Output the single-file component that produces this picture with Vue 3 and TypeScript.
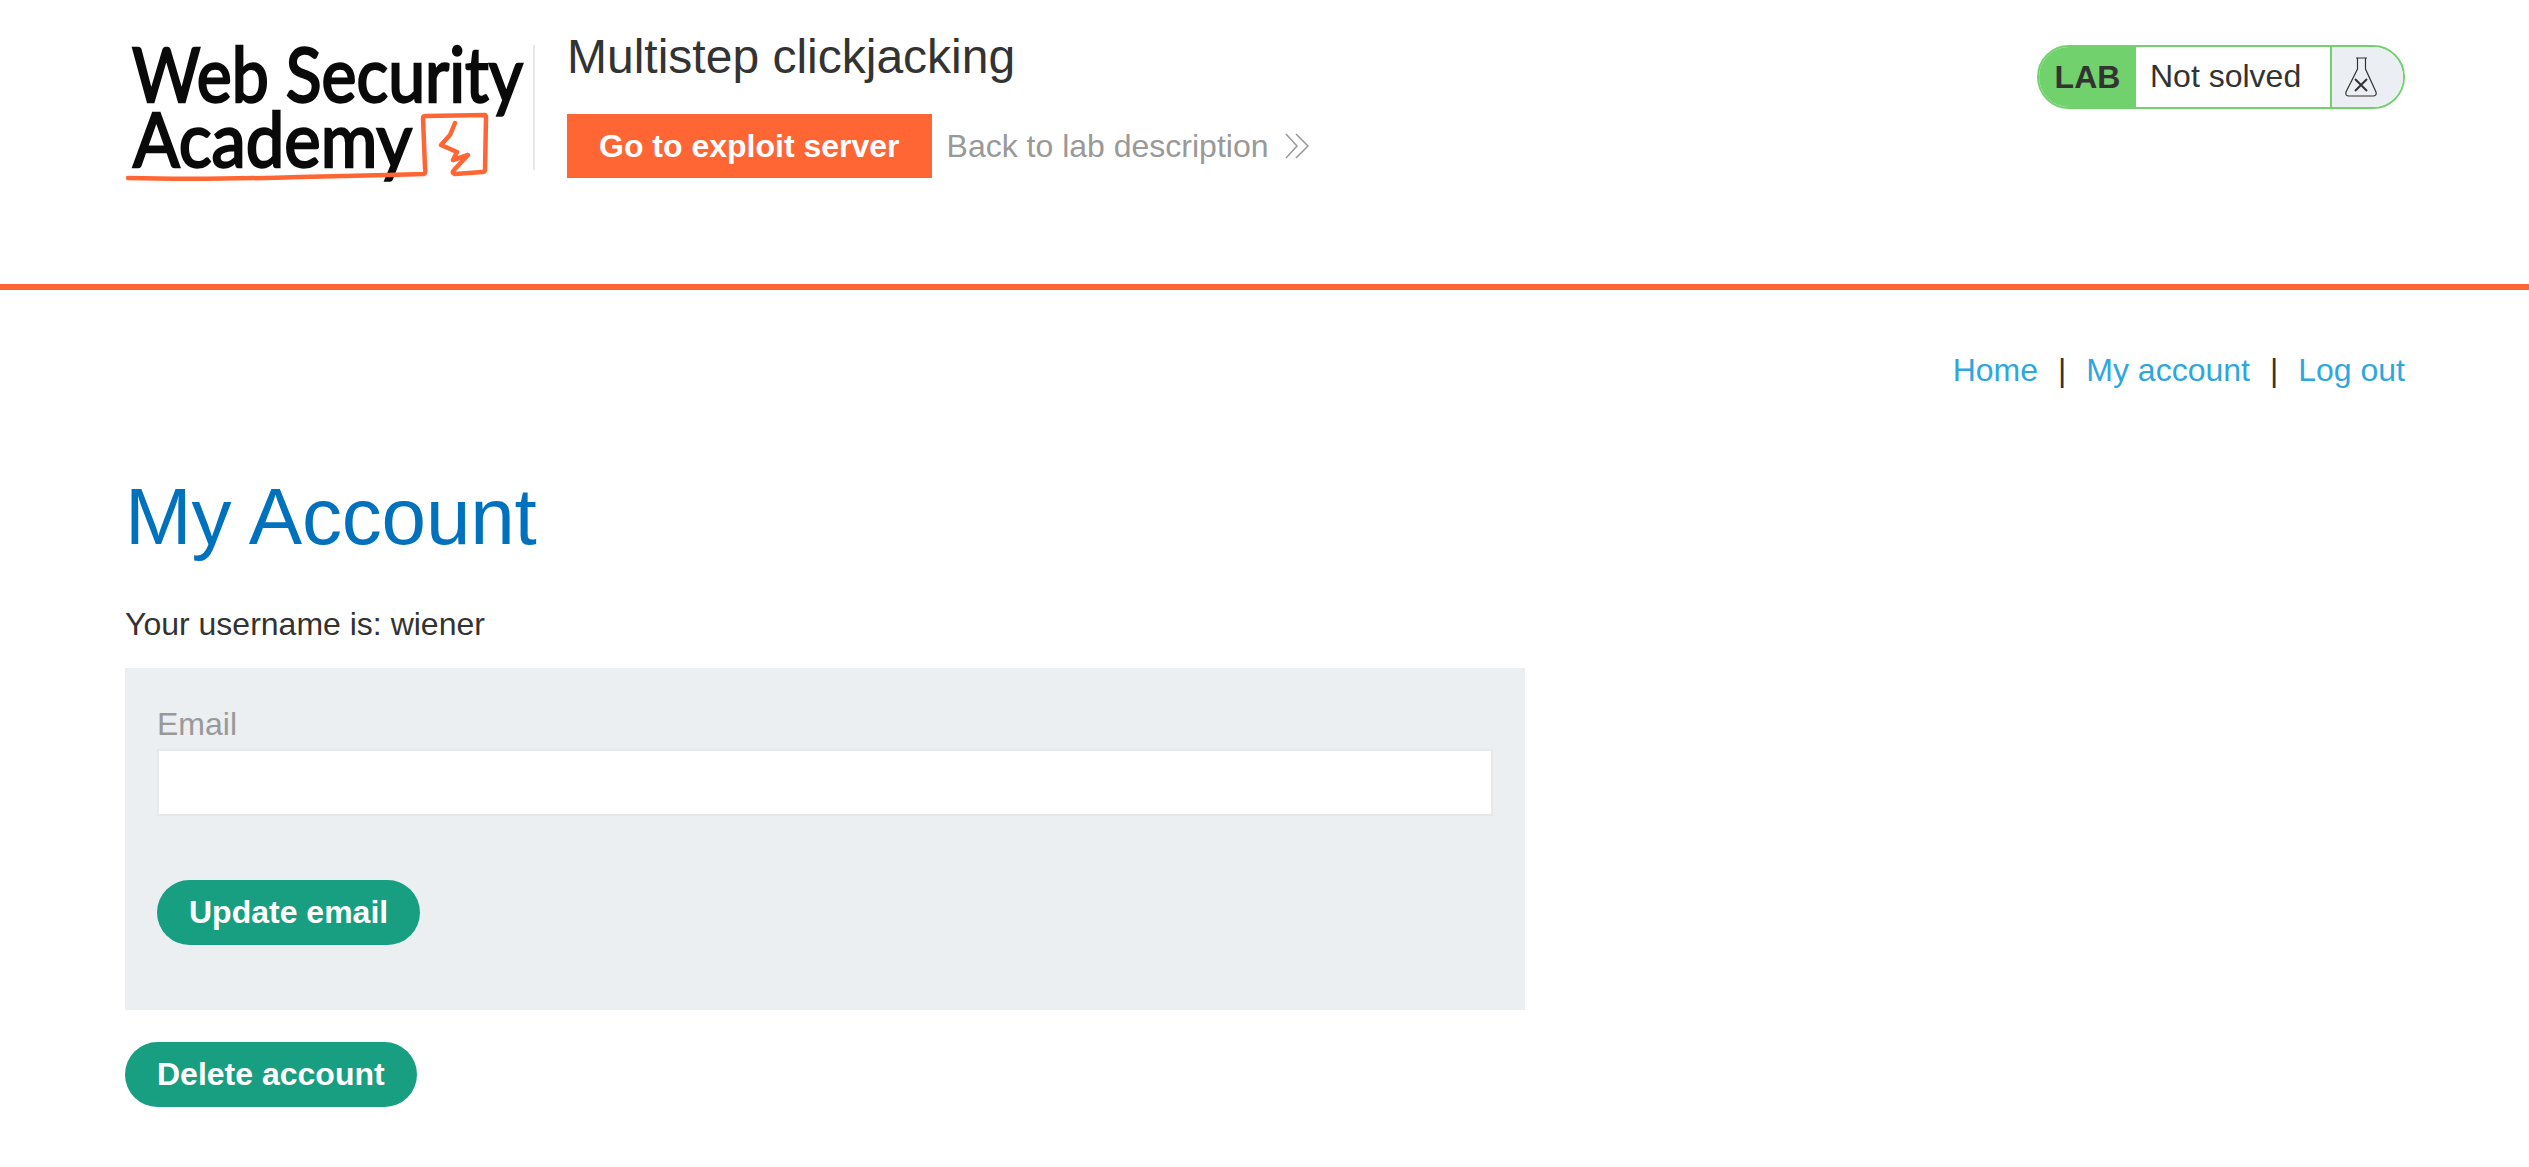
<template>
  <div class="page">
    <header class="lab-header">
      <div class="header-inner">
        <a class="logo" href="#" aria-label="Web Security Academy">
          <svg viewBox="125 30 405 160" width="405" height="160">
            <text x="132" y="102" class="logo-text" textLength="391" lengthAdjust="spacingAndGlyphs">Web Security</text>
            <text x="133" y="167" class="logo-text" textLength="279" lengthAdjust="spacingAndGlyphs">Academy</text>
            <path
              class="logo-line"
              d="M128 178 Q200 180 300 177 L388 175 L424 174 Q426 173 425 168 L423 118 Q423 116 426 116 L485 115 Q486 115 486 118 L485 170 Q485 172 482 172 L455 174 Q451 173 454 170 L468 155 L453 160 L457 152 L441 145 L450 135 L455 123"
            />
          </svg>
        </a>
        <div class="title-block">
          <h2 class="lab-title">Multistep clickjacking</h2>
          <div class="title-actions">
            <a class="exploit-btn" href="#">Go to exploit server</a>
            <a class="back-link" href="#">
              Back to lab description
              <svg viewBox="0 0 26 28" width="26" height="28">
                <path d="M2 2 L13 14 L2 26 M12 2 L24 14 L12 26" />
              </svg>
            </a>
          </div>
        </div>
        <div class="lab-status">
          <span class="status-tag">LAB</span>
          <span class="status-text">Not solved</span>
          <span class="status-icon">
            <svg viewBox="0 0 34 42" width="34" height="42">
              <path class="flask" d="M12 2 H23 M13.500 2 V13 L2 36 Q1 40 5 40 H29 Q33 40 32 36 L21.500 13 V2" />
              <path class="flask-x" d="M11 23 L23 35 M23 23 L11 35" />
            </svg>
          </span>
        </div>
      </div>
    </header>

    <main class="content">
      <nav class="top-links">
        <a href="#">Home</a>
        <span class="sep">|</span>
        <a href="#">My account</a>
        <span class="sep">|</span>
        <a href="#">Log out</a>
      </nav>
      <h1 class="page-title">My Account</h1>
      <p class="username">Your username is: wiener</p>
      <form class="email-form" @submit.prevent>
        <label for="email">Email</label>
        <input id="email" v-model="email" type="email" />
        <button type="submit" class="green-btn">Update email</button>
      </form>
      <button type="button" class="green-btn delete-btn">Delete account</button>
    </main>
  </div>
</template>

<script setup lang="ts">
  import { ref } from 'vue'

  const email = ref('')
</script>

<style>
  html,
  body {
    margin: 0;
    background: #fff;
  }
</style>

<style scoped>
  .page {
    font-family: 'Liberation Sans', Arial, sans-serif;
    font-size: 32px;
    color: #333332;
  }

  a {
    text-decoration: none;
  }

  /* 顶部实验信息 */
  .lab-header {
    height: 284px;
    border-bottom: 6px solid #ff6633;
  }

  .header-inner {
    display: flex;
    align-items: flex-start;
    padding: 30px 124px 0 125px;
  }

  .logo {
    display: block;
    position: relative;
    width: 410px;
    height: 140px;
    flex-shrink: 0;
  }

  /* 标题前的竖线 */
  .logo::after {
    content: '';
    position: absolute;
    right: 0;
    top: 15px;
    bottom: 0;
    width: 2px;
    background: #e6e8ea;
  }

  .logo svg {
    display: block;
    overflow: visible;
  }

  .logo-text {
    font-family: Lato, 'Noto Sans', sans-serif;
    font-size: 76px;
    font-weight: 400;
    fill: #0a0a0a;
    stroke: #0a0a0a;
    stroke-width: 2.400;
  }

  .logo-line {
    fill: none;
    stroke: #ff6633;
    stroke-width: 4.500;
    stroke-linejoin: round;
    stroke-linecap: round;
  }

  .title-block {
    flex: 1;
    padding-left: 32px;
  }

  .lab-title {
    margin: 0;
    font-size: 48px;
    font-weight: 400;
    line-height: 54px;
  }

  .title-actions {
    display: flex;
    align-items: center;
    margin-top: 30px;
  }

  .exploit-btn {
    display: block;
    padding: 0 32px;
    line-height: 64px;
    background: #ff6633;
    color: #fff;
    font-weight: 700;
  }

  .back-link {
    display: flex;
    align-items: center;
    gap: 16px;
    margin-left: 15px;
    color: #999;
  }

  .back-link svg path {
    fill: none;
    stroke: #999;
    stroke-width: 1.500;
  }

  /* 右上角状态徽标 */
  .lab-status {
    display: flex;
    align-items: stretch;
    height: 64px;
    margin-top: 15px;
    box-sizing: border-box;
    border: 2px solid #70d16d;
    border-radius: 32px;
    overflow: hidden;
    width: 368px;
  }

  .status-tag {
    width: 97px;
    background: #70d16d;
    font-weight: 700;
    text-align: center;
    line-height: 60px;
  }

  .status-text {
    flex: 1;
    padding-left: 14px;
    line-height: 58px;
    border-right: 2px solid #70d16d;
  }

  .status-icon {
    display: flex;
    align-items: center;
    justify-content: flex-start;
    width: 71px;
    padding-left: 12px;
    box-sizing: border-box;
    background: #ebeef2;
  }

  .flask {
    fill: none;
    stroke: #333332;
    stroke-width: 1.200;
  }

  .flask-x {
    fill: none;
    stroke: #333332;
    stroke-width: 2;
  }

  /* 主内容 */
  .content {
    padding: 0 124px 0 125px;
  }

  .top-links {
    display: flex;
    justify-content: flex-end;
    gap: 20px;
    padding-top: 60px;
    line-height: 40px;
  }

  .top-links a {
    color: #2fa6de;
  }

  .page-title {
    margin: 81px 0 0;
    font-size: 80px;
    font-weight: 400;
    line-height: 92px;
    color: #0071bc;
    letter-spacing: -0.2px;
  }

  .username {
    margin: 41px 0 0;
    line-height: 40px;
  }

  .email-form {
    display: flex;
    flex-direction: column;
    align-items: flex-start;
    box-sizing: border-box;
    width: 1400px;
    height: 342px;
    margin-top: 24px;
    padding: 36px 32px 0;
    background: #ebeff2;
  }

  .email-form label {
    line-height: 40px;
    color: #999;
  }

  .email-form input {
    box-sizing: border-box;
    width: 100%;
    height: 67px;
    margin: 5px 0 64px;
    border: 2px solid #e6e8ea;
    background: #fff;
    outline: none;
  }

  .green-btn {
    height: 65px;
    padding: 0 32px;
    border: 0;
    border-radius: 33px;
    background: #189e80;
    color: #fff;
    font-family: inherit;
    font-size: 32px;
    font-weight: 700;
  }

  .delete-btn {
    display: block;
    margin-top: 32px;
  }
</style>
